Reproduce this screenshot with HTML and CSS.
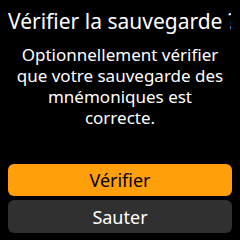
FILE: index.html
```html
<!DOCTYPE html>
<html lang="fr">

<head>
	<meta charset="UTF-8">
	<meta name="viewport" content="width=device-width, initial-scale=1.0">
	<title>Vérifier la sauvegarde</title>
	<link rel="stylesheet" href="styles.css">
</head>

<body>
	<div class="screen">
		<h1 class="screen-title">Vérifier la sauvegarde ?</h1>
		<p class="screen-text">Optionnellement vérifier que votre sauvegarde des mnémoniques est correcte.</p>

		<div class="screen-actions">
			<button class="btn btn-primary">Vérifier</button>
			<button class="btn btn-secondary">Sauter</button>
		</div>
	</div>
</body>

</html>
```

FILE: styles.css
```css
* {
	margin: 0;
	padding: 0;
	box-sizing: border-box;
	font-family: 'Noto Sans', 'Open Sans', Arial, sans-serif;
}

body {
	width: 240px;
	height: 240px;
	background: #000;
	color: #fff;
	overflow: hidden;
}

.screen {
	display: flex;
	flex-direction: column;
	height: 240px;
	padding: 8px 8px 7px;
}

.screen-title {
	font-size: 21px;
	font-weight: 400;
	line-height: 27px;
	white-space: nowrap;
	overflow: hidden;
	width: 223px;
}

.screen-text {
	margin: 9px 8px 0;
	font-size: 17px;
	line-height: 21px;
	text-align: center;
}

.screen-actions {
	margin-top: auto;
	display: flex;
	flex-direction: column;
	gap: 4px;
}

.btn {
	height: 32px;
	border: 0;
	border-radius: 6px;
	font-size: 18px;
	font-weight: 400;
	cursor: pointer;
}

.btn-primary {
	background: #ff9f0a;
	color: #000;
}

.btn-secondary {
	height: 33px;
	background: #303030;
	color: #fff;
}
```
